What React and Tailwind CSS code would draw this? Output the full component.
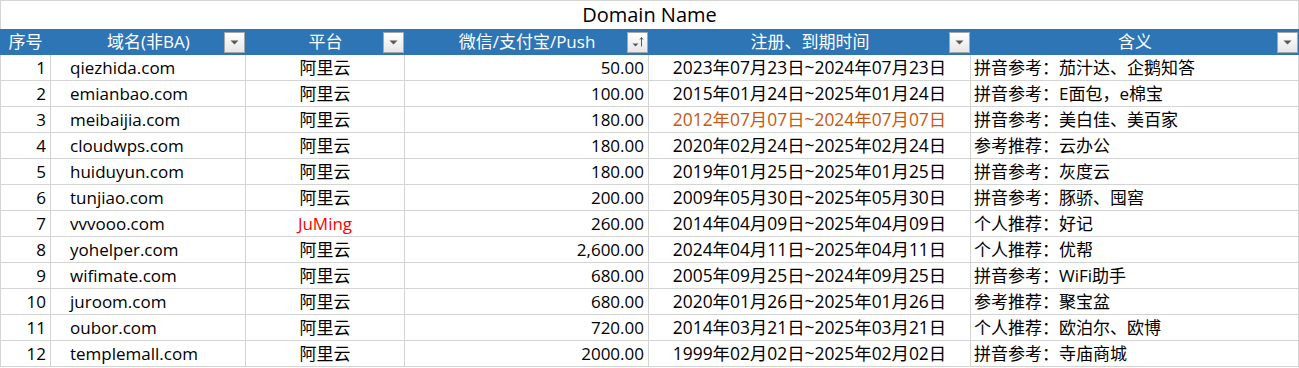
const rows = [
  [1, "qiezhida.com", "阿里云", "50.00", "2023年07月23日~2024年07月23日", "拼音参考：茄汁达、企鹅知答"],
  [2, "emianbao.com", "阿里云", "100.00", "2015年01月24日~2025年01月24日", "拼音参考：E面包，e棉宝"],
  [3, "meibaijia.com", "阿里云", "180.00", "2012年07月07日~2024年07月07日", "拼音参考：美白佳、美百家", "orange"],
  [4, "cloudwps.com", "阿里云", "180.00", "2020年02月24日~2025年02月24日", "参考推荐：云办公"],
  [5, "huiduyun.com", "阿里云", "180.00", "2019年01月25日~2025年01月25日", "拼音参考：灰度云"],
  [6, "tunjiao.com", "阿里云", "200.00", "2009年05月30日~2025年05月30日", "拼音参考：豚骄、囤窖"],
  [7, "vvvooo.com", "JuMing", "260.00", "2014年04月09日~2025年04月09日", "个人推荐：好记", "red"],
  [8, "yohelper.com", "阿里云", "2,600.00", "2024年04月11日~2025年04月11日", "个人推荐：优帮"],
  [9, "wifimate.com", "阿里云", "680.00", "2005年09月25日~2024年09月25日", "拼音参考：WiFi助手"],
  [10, "juroom.com", "阿里云", "680.00", "2020年01月26日~2025年01月26日", "参考推荐：聚宝盆"],
  [11, "oubor.com", "阿里云", "720.00", "2014年03月21日~2025年03月21日", "个人推荐：欧泊尔、欧博"],
  [12, "templemall.com", "阿里云", "2000.00", "1999年02月02日~2025年02月02日", "拼音参考：寺庙商城"],
];

function FilterButton({ sort }) {
  return (
    <span className="absolute right-[1px] bottom-[2px] w-[21px] h-[21px] border border-[#a6a6a6] bg-gradient-to-b from-white to-[#e6e6e6] flex items-center justify-center">
      {sort ? (
        <svg width="15" height="15" viewBox="0 0 15 15">
          <path d="M2.5 8.5h6l-3 3z" fill="#595959" />
          <path d="M11.5 2.5v9M10 4.5l1.5-2 1.5 2" stroke="#595959" strokeWidth="1" fill="none" />
        </svg>
      ) : (
        <svg width="9" height="5" viewBox="0 0 9 5">
          <path d="M0.5 0.5h8l-4 4z" fill="#595959" />
        </svg>
      )}
    </span>
  );
}

export default function App() {
  const cell = "h-[26px] border-r border-b border-[#d4d4d4] flex items-center whitespace-nowrap overflow-hidden";
  const head = "relative h-[26px] bg-[#2e75b6] text-white flex items-center justify-center";
  return (
    <div
      className="w-[1299px] h-[368px] bg-white text-[17px] text-black overflow-hidden"
      style={{ fontFamily: '"Open Sans", "Noto Sans CJK SC", sans-serif' }}
    >
      <div className="border-t border-l border-r border-[#d4d4d4] h-[29px] flex items-center justify-center text-[20px]">
        Domain Name
      </div>
      <div className="grid grid-cols-[51px_195px_159px_244px_322px_328px]">
        <div className={head}>序号</div>
        <div className={head}>
          域名(非BA)
          <FilterButton />
        </div>
        <div className={head}>
          平台
          <FilterButton />
        </div>
        <div className={head}>
          微信/支付宝/Push
          <FilterButton sort />
        </div>
        <div className={head}>
          注册、到期时间
          <FilterButton />
        </div>
        <div className={head}>
          含义
          <FilterButton />
        </div>

        {rows.map((r) => (
          <div key={r[0]} className="contents">
            <div className={`${cell} border-l justify-end pr-[4px]`}>{r[0]}</div>
            <div className={`${cell} pl-[19px]`}>{r[1]}</div>
            <div className={`${cell} justify-center ${r[6] === "red" ? "text-[#ff0000]" : ""}`}>{r[2]}</div>
            <div className={`${cell} justify-end pr-[4px]`}>{r[3]}</div>
            <div className={`${cell} justify-center text-[17.4px] ${r[6] === "orange" ? "text-[#c55a11]" : ""}`}>{r[4]}</div>
            <div className={`${cell} pl-[3px]`}>{r[5]}</div>
          </div>
        ))}
      </div>
    </div>
  );
}
